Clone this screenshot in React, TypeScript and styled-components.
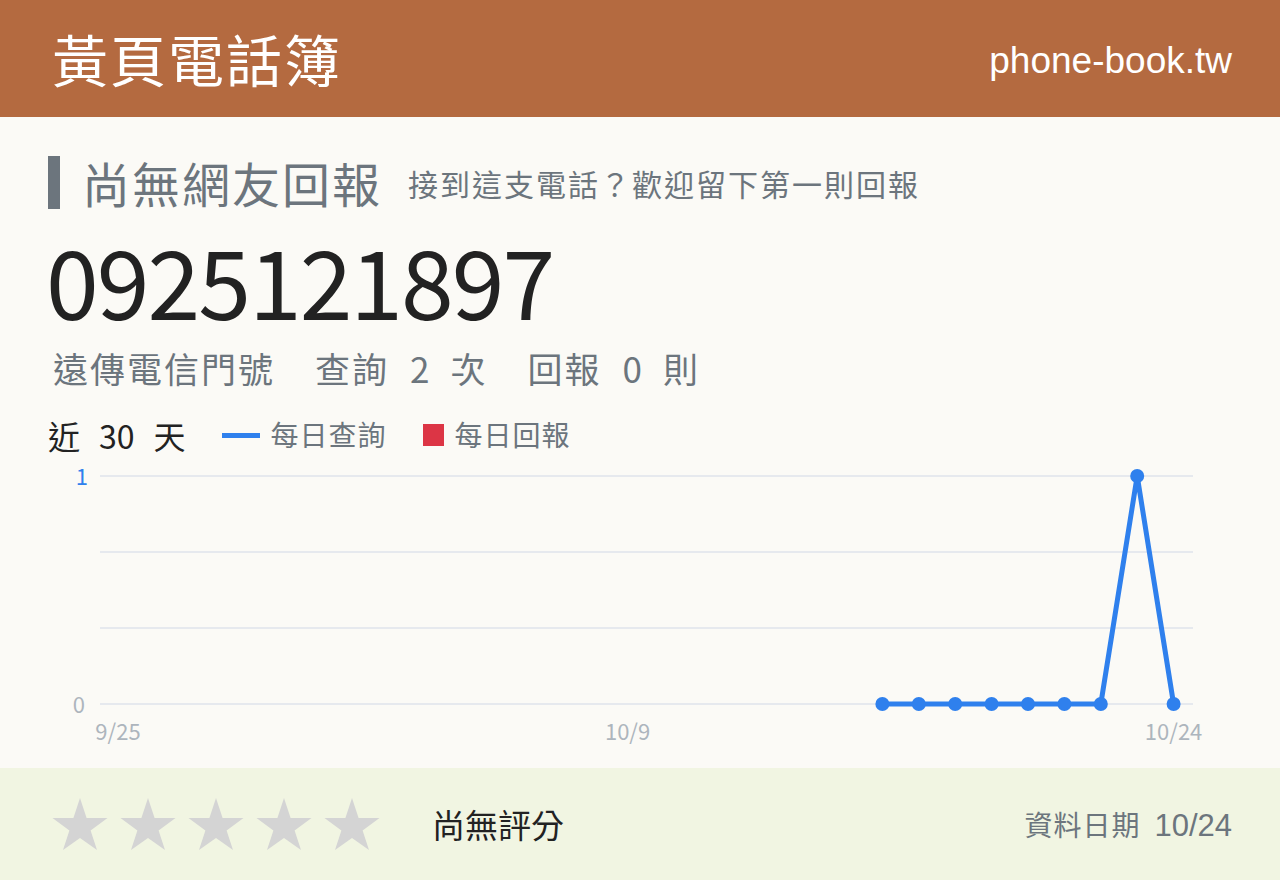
import React from "react";
import styled, { createGlobalStyle } from "styled-components";

const GlobalStyle = createGlobalStyle`
  html, body { margin: 0; padding: 0; }
  body {
    background: #fbfaf6;
    font-family: "Noto Sans CJK TC", "Noto Sans", sans-serif;
    color: #212529;
  }
`;

const CJK = `"Noto Sans CJK TC", "Noto Sans", sans-serif`;
const LATIN = `"Liberation Sans", "Noto Sans CJK TC", sans-serif`;

const Page = styled.div`
  width: 1280px;
  height: 880px;
  display: flex;
  flex-direction: column;
  background: #fbfaf6;
  overflow: hidden;
`;

const Header = styled.header`
  height: 117px;
  flex: none;
  background: #b46a40;
  display: flex;
  align-items: center;
  justify-content: space-between;
  padding: 0 48px 0 52px;
  color: #fff;
`;

const Brand = styled.div`
  font-family: ${CJK};
  font-size: 56px;
  letter-spacing: 2px;
  line-height: 1;
  margin-top: -2px;
`;

const Domain = styled.div`
  font-family: ${LATIN};
  font-size: 37px;
  line-height: 1;
  margin-top: 4px;
`;

const Main = styled.main`
  flex: 1;
  padding: 38px 48px 0;
  display: flex;
  flex-direction: column;
`;

const TitleRow = styled.div`
  display: flex;
  align-items: center;
  height: 54px;
`;

const Bar = styled.span`
  width: 12px;
  height: 53px;
  background: #6c757d;
  margin-right: 22px;
`;

const Title = styled.h1`
  margin: 0;
  font-family: ${CJK};
  font-weight: 400;
  font-size: 48px;
  letter-spacing: 2px;
  color: #6c757d;
  line-height: 1;
`;

const Subtitle = styled.span`
  font-family: ${CJK};
  font-size: 30px;
  letter-spacing: 2px;
  color: #6c757d;
  margin-left: 26px;
  margin-top: 2px;
  line-height: 1;
`;

const Phone = styled.div`
  font-family: ${CJK};
  font-size: 95px;
  letter-spacing: -2px;
  line-height: 1;
  color: #222;
  margin-top: 22px;
  margin-left: -2px;
`;

const Stats = styled.div`
  display: flex;
  gap: 40px;
  font-family: ${CJK};
  font-size: 35px;
  letter-spacing: 2px;
  color: #6c757d;
  margin-top: 21px;
  margin-left: 5px;
  line-height: 1.2;
`;

/* a number set between two words, with roomy gaps on both sides */
const Num = styled.span<{ $gap: number }>`
  margin: 0 ${({ $gap }) => $gap}px;
  letter-spacing: 0;
`;

const Legend = styled.div`
  display: flex;
  align-items: center;
  margin-top: 27px;
  line-height: 1.2;
`;

const Range = styled.span`
  font-family: ${CJK};
  font-size: 32px;
  color: #222;
  margin-right: 36px;
`;

const Key = styled.span`
  display: flex;
  align-items: center;
  font-family: ${CJK};
  font-size: 28px;
  letter-spacing: 1px;
  color: #6c757d;
  margin-right: 36px;
`;

const Swatch = styled.span<{ $kind: "line" | "box" }>`
  display: inline-block;
  margin-right: 11px;
  ${({ $kind }) =>
    $kind === "line"
      ? `width: 38px; height: 5px; background: #2f80ed;`
      : `width: 21px; height: 22px; background: #dc3545;`}
`;

const ChartSvg = styled.svg`
  display: block;
  margin-top: 6px;
  overflow: visible;
`;

const Footer = styled.footer`
  height: 112px;
  flex: none;
  background: #f1f5e2;
  display: flex;
  align-items: center;
  padding: 0 48px 0 52px;
`;

const Stars = styled.div`
  display: flex;
  gap: 12px;
`;

const Rating = styled.span`
  font-family: ${CJK};
  font-size: 33px;
  color: #222;
  margin-left: 52px;
`;

const DataDate = styled.span`
  margin-left: auto;
  font-family: ${CJK};
  font-size: 28px;
  letter-spacing: 1px;
  color: #6c757d;
  display: flex;
  align-items: baseline;
  gap: 14px;
`;

const DateNum = styled.span`
  font-family: ${LATIN};
  font-size: 31px;
  letter-spacing: 0;
`;

const Star = () => (
  <svg width="56" height="54" viewBox="0 0 56 54">
    <polygon
      points="28,1 34.6,21 55.5,21 38.6,33.5 45,53 28,41 11,53 17.4,33.5 0.5,21 21.4,21"
      fill="#d4d4d4"
    />
  </svg>
);

/* daily lookups for the last 30 days (9/25 .. 10/24); null = no record */
const lookups: (number | null)[] = [
  ...Array(21).fill(null),
  0, 0, 0, 0, 0, 0, 0, 1, 0,
];

const W = 1184;
const H = 288;
const gridL = 52;
const gridR = 1145;
const yTop = 16;
const yBottom = 244;
const x0 = 70;
const step = 36.4;

const Chart = () => {
  const pts = lookups
    .map((v, i) => (v === null ? null : { x: x0 + i * step, y: yBottom - v * (yBottom - yTop) }))
    .filter((p): p is { x: number; y: number } => p !== null);
  const grid = [0, 1, 2, 3].map((k) => yTop + k * ((yBottom - yTop) / 3));
  const labels = [
    { i: 0, t: "9/25" },
    { i: 14, t: "10/9" },
    { i: 29, t: "10/24" },
  ];
  return (
    <ChartSvg width={W} height={H} viewBox={`0 0 ${W} ${H}`}>
      {grid.map((y) => (
        <line key={y} x1={gridL} x2={gridR} y1={y} y2={y} stroke="#e6e9ee" strokeWidth="2" />
      ))}
      <text x="40" y={yTop + 9} textAnchor="end" fontFamily={CJK} fontSize="22" fill="#2f80ed">
        1
      </text>
      <text x="37" y={yBottom + 9} textAnchor="end" fontFamily={CJK} fontSize="22" fill="#adb5bd">
        0
      </text>
      {labels.map((l) => (
        <text
          key={l.t}
          x={x0 + l.i * step}
          y="280"
          textAnchor="middle"
          fontFamily={CJK}
          fontSize="22"
          fill="#adb5bd"
        >
          {l.t}
        </text>
      ))}
      <polyline
        points={pts.map((p) => `${p.x},${p.y}`).join(" ")}
        fill="none"
        stroke="#2f80ed"
        strokeWidth="5"
        strokeLinejoin="round"
      />
      {pts.map((p, i) => (
        <circle key={i} cx={p.x} cy={p.y} r="7" fill="#2f80ed" />
      ))}
    </ChartSvg>
  );
};

export default function App() {
  return (
    <>
      <GlobalStyle />
      <Page>
        <Header>
          <Brand>黃頁電話簿</Brand>
          <Domain>phone-book.tw</Domain>
        </Header>
        <Main>
          <TitleRow>
            <Bar />
            <Title>尚無網友回報</Title>
            <Subtitle>接到這支電話？歡迎留下第一則回報</Subtitle>
          </TitleRow>
          <Phone>0925121897</Phone>
          <Stats>
            <span>遠傳電信門號</span>
            <span>
              查詢<Num $gap={21}>2</Num>次
            </span>
            <span>
              回報<Num $gap={21}>0</Num>則
            </span>
          </Stats>
          <Legend>
            <Range>
              近<Num $gap={19}>30</Num>天
            </Range>
            <Key>
              <Swatch $kind="line" />
              每日查詢
            </Key>
            <Key>
              <Swatch $kind="box" />
              每日回報
            </Key>
          </Legend>
          <Chart />
        </Main>
        <Footer>
          <Stars>
            {[0, 1, 2, 3, 4].map((i) => (
              <Star key={i} />
            ))}
          </Stars>
          <Rating>尚無評分</Rating>
          <DataDate>
            資料日期
            <DateNum>10/24</DateNum>
          </DataDate>
        </Footer>
      </Page>
    </>
  );
}
